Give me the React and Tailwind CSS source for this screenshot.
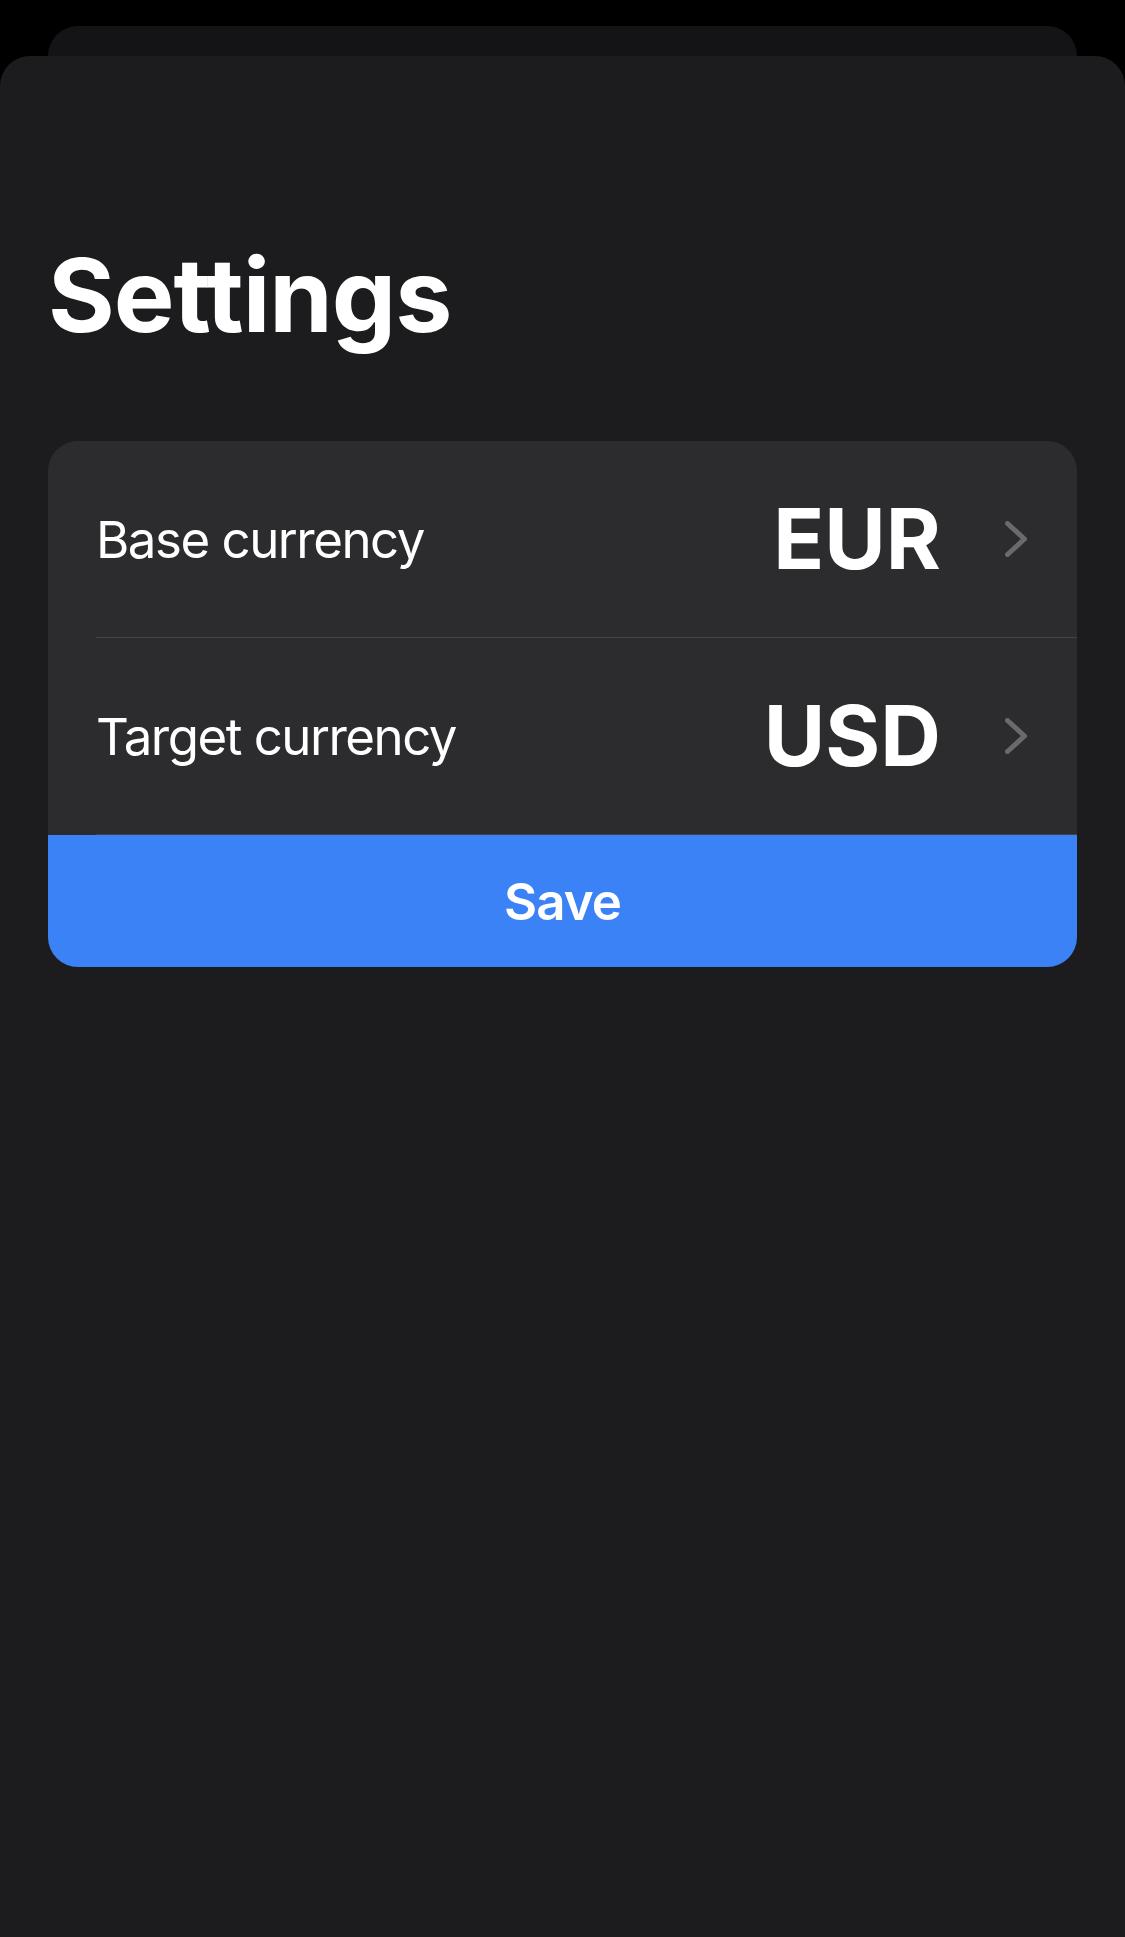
import React from "react";

function Chevron() {
  return (
    <svg width="22" height="36" viewBox="0 0 22 36" fill="none" className="shrink-0">
      <path d="M2.5 2.5 L19.5 18 L2.5 33.5" stroke="#69696e" strokeWidth="5" strokeLinecap="round" strokeLinejoin="round" />
    </svg>
  );
}

function Row({ label, value }) {
  return (
    <div className="h-[196px] flex items-center pl-[48px] pr-[50px]">
      <div className="flex-1 text-[51px] text-white leading-none tracking-[-1.5px]">{label}</div>
      <div className="text-[84px] font-bold text-white leading-none mr-[64px]">{value}</div>
      <Chevron />
    </div>
  );
}

export default function App() {
  return (
    <div
      className="w-[1125px] min-h-[1937px] bg-black flex flex-col"
      style={{ fontFamily: "Inter, 'Noto Sans', sans-serif" }}
    >
      <div className="mt-[26px] mx-[48px] h-[30px] rounded-t-[30px] bg-[#141416]" />
      <div className="flex-1 bg-[#1c1c1e] rounded-t-[30px] px-[48px] pt-[188px]">
        <h1 className="text-[102px] font-bold text-white leading-none tracking-[-1px]">Settings</h1>
        <div className="mt-[95px] bg-[#2c2c2e] rounded-[30px] overflow-hidden">
          <Row label="Base currency" value="EUR" />
          <div className="ml-[48px] h-px bg-[#434346]" />
          <Row label="Target currency" value="USD" />
          <div className="ml-[48px] h-px bg-[#434346]" />
          <button className="w-full h-[132px] bg-[#3b82f6] text-white text-[51px] font-semibold leading-none tracking-[-1px]">
            Save
          </button>
        </div>
      </div>
    </div>
  );
}
